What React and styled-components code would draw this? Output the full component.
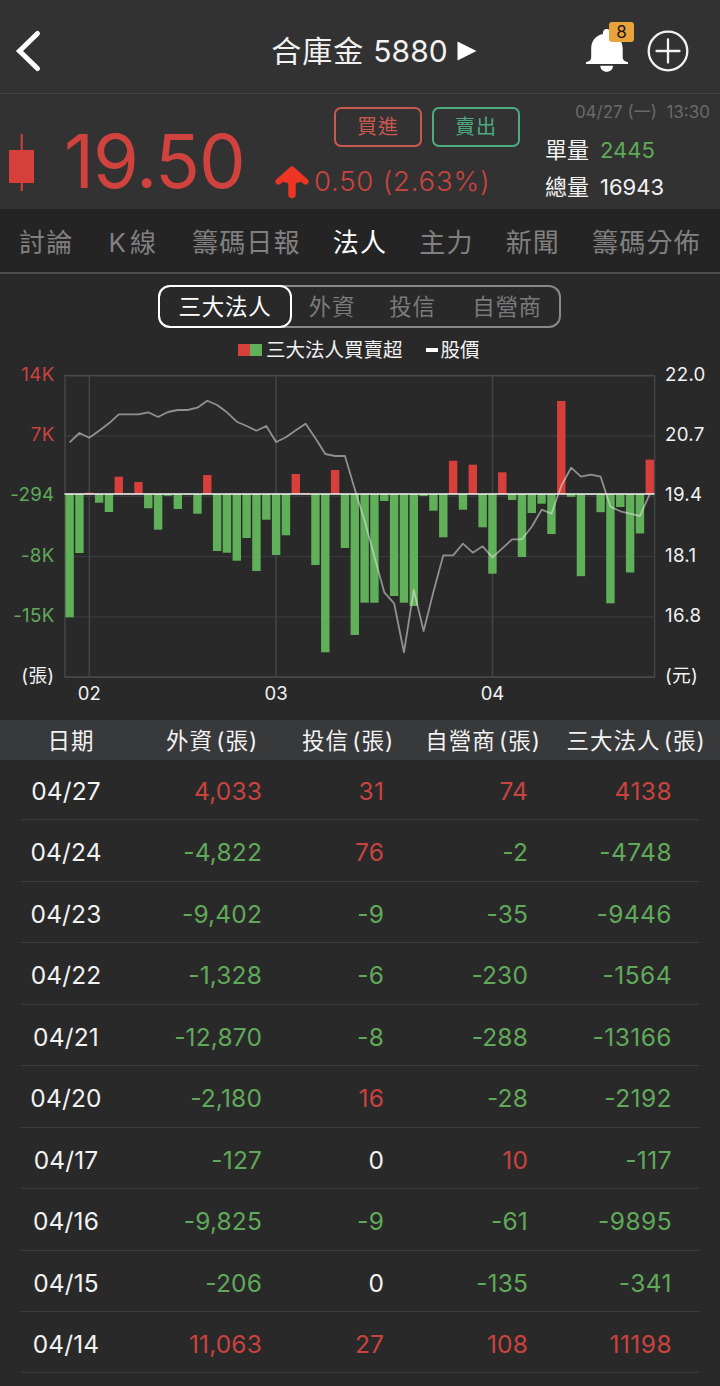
import React from 'react';
import styled, { createGlobalStyle } from 'styled-components';

const TABS = ['討論', 'K線', '籌碼日報', '法人', '主力', '新聞', '籌碼分佈'];

const SEGMENTS = [
  { label: '三大法人', width: 134 },
  { label: '外資', width: 80 },
  { label: '投信', width: 81 },
  { label: '自營商', width: 108 },
];

const COLUMNS = ['日期', '外資 (張)', '投信 (張)', '自營商 (張)', '三大法人 (張)'];

const ROWS = [
  ['04/27', '4,033', '31', '74', '4138'],
  ['04/24', '-4,822', '76', '-2', '-4748'],
  ['04/23', '-9,402', '-9', '-35', '-9446'],
  ['04/22', '-1,328', '-6', '-230', '-1564'],
  ['04/21', '-12,870', '-8', '-288', '-13166'],
  ['04/20', '-2,180', '16', '-28', '-2192'],
  ['04/17', '-127', '0', '10', '-117'],
  ['04/16', '-9,825', '-9', '-61', '-9895'],
  ['04/15', '-206', '0', '-135', '-341'],
  ['04/14', '11,063', '27', '108', '11198'],
];

// net buy / sell per day, in lots
const NET = [
  -14845, -7104, 160, -1047, -2167, 2083, 90, 1445, -1722, -4298, -205, -1806,
  -80, -2372, 2288, -6863, -7067, -8031, -5298, -9271, -3094, -7344, -4973,
  2408, 130, -8548, -19059, 2890, -6502, -16976, -13087, -13087, -843, -12281,
  -13087, -13485, -241, -2011, -5213, 4009, -1890, 3528, -4009, -9596, 2613,
  -722, -7585, -2288, -1168, -4816, 11198, -341, -9895, -117, -2192, -13166,
  -1564, -9446, -4748, 4138,
];

// price line, distance from the top of the plot
const PRICE = [
  66.6, 57.3, 62, 55, 47.6, 38.6, 38.6, 38.6, 36.6, 41.3, 36.3, 34.3, 34.3, 32,
  25, 29.3, 36.6, 46, 50.3, 55, 50.3, 66.3, 61.6, 54.6, 48, 62.6, 78.3, 80.3,
  80.3, 113.6, 145, 181, 216.6, 227.6, 276.6, 214.3, 255.3, 216, 179.6, 179.6,
  168, 177, 170.6, 181.6, 172.6, 163.6, 163.6, 151, 134, 138, 110.3, 92, 101,
  99, 101, 131, 135.6, 138, 140.3, 118.3,
];

const PLOT = { left: 1, top: 10.7, width: 590, height: 301.6 };
const STEP = PLOT.width / NET.length;
const BASE = 129;
const LOTS_PER_PX = 120.4;

const centerOf = i => PLOT.left + STEP * (i + 0.5) - 0.3;

const signOf = value => {
  if (value.startsWith('-')) return 'down';
  return value === '0' ? 'flat' : 'up';
};

const Chart = () => (
  <Plot viewBox="0 0 592 343">
    {[0, 1, 2, 3, 4, 5].map(i => (
      <line
        key={i}
        x1={PLOT.left - 1}
        x2={PLOT.left + PLOT.width}
        y1={PLOT.top + i * 60.3}
        y2={PLOT.top + i * 60.3}
        stroke={i % 5 ? '#383838' : '#484848'}
        strokeWidth={i % 5 ? 1.4 : 1.8}
      />
    ))}
    {[PLOT.left, centerOf(2), centerOf(21), centerOf(43), 590.6].map(x => (
      <line key={x} x1={x} x2={x} y1={PLOT.top} y2={312.3} stroke="#434343" strokeWidth="1.6" />
    ))}
    {NET.map((net, i) => {
      const size = Math.abs(net) / LOTS_PER_PX;
      return (
        <rect
          key={i}
          x={centerOf(i) - 4.2}
          y={net > 0 ? BASE - size : BASE}
          width="8.4"
          height={size}
          fill={net > 0 ? '#d63f3a' : '#60b059'}
        />
      );
    })}
    <line x1="0.5" x2="590.5" y1="129" y2="129" stroke="#f4f4f4" strokeWidth="1.7" />
    <polyline
      points={PRICE.map((y, i) => `${centerOf(i)},${y + PLOT.top}`).join(' ')}
      fill="none"
      stroke="#e6e6e6"
      strokeOpacity="0.55"
      strokeWidth="1.8"
      strokeLinejoin="round"
    />
    <Month x={centerOf(2)} y="335">02</Month>
    <Month x={centerOf(21)} y="335">03</Month>
    <Month x={centerOf(43)} y="335">04</Month>
  </Plot>
);

export default function App() {
  return (
    <Page>
      <GlobalStyle />
      <Header>
        <BackButton aria-label="back">
          <svg width="30" height="44" viewBox="0 0 30 44">
            <path d="M23.500 4.500 5.500 22l18 17.500" fill="none" stroke="#fff" strokeWidth="5" strokeLinecap="round" />
          </svg>
        </BackButton>
        <StockName>
          <span>合庫金</span> 5880
          <svg width="20" height="20" viewBox="0 0 20 20">
            <path d="M0.5 0.5 19.5 10 0.5 19.5z" fill="#fff" />
          </svg>
        </StockName>
        <Actions>
          <Bell>
            <svg width="44" height="46" viewBox="0 0 44 46">
              <path
                d="M17.800 6C17.800 2.800 19.300 1 21.700 1s3.900 1.800 3.900 5C33.500 7.600 37.700 13.500 37.700 20.500V29c0 3.200 1.800 4.200 5.300 5.200V36H1v-1.800c3.500-1 5.200-2 5.200-5.200v-8.500C6.200 13.500 10.200 7.600 17.800 6z"
                fill="#fff"
              />
              <path d="M15.300 37.700H28c0 3.800-2.800 6-6.300 6s-6.400-2.200-6.400-6z" fill="#fff" />
            </svg>
            <Badge>8</Badge>
          </Bell>
          <svg width="42" height="42" viewBox="0 0 42 42">
            <circle cx="21" cy="21" r="19.300" fill="none" stroke="#f2f2f2" strokeWidth="2.300" />
            <path d="M9.500 21h23M21 9.500v23" stroke="#f2f2f2" strokeWidth="2.300" strokeLinecap="round" />
          </svg>
        </Actions>
      </Header>

      <Quote>
        <Candle>
          <svg width="26" height="57" viewBox="0 0 26 57">
            <path d="M12.700 0v57" stroke="#d63f3a" strokeWidth="2" />
            <rect x="0" y="16" width="25" height="33" fill="#d63f3a" />
          </svg>
        </Candle>
        <Price>19.50</Price>
        <Trade>
          <TradeButtons>
            <TradeButton $color="#c9594f">買進</TradeButton>
            <TradeButton $color="#4cac80">賣出</TradeButton>
          </TradeButtons>
          <Change>
            <svg width="34" height="33" viewBox="0 0 34 33">
              <path
                d="M3.500 15.500 17 3.500 30.500 15.500"
                fill="none"
                stroke="#ee3524"
                strokeWidth="6"
                strokeLinecap="round"
                strokeLinejoin="round"
              />
              <path d="M17 6v22.500" stroke="#ee3524" strokeWidth="7.500" strokeLinecap="round" />
              <path d="M17 3 29 15 20 17.500h-6L5 15z" fill="#ee3524" />
            </svg>
            <span>0.50 (2.63%)</span>
          </Change>
        </Trade>
        <Volume>
          <Time>04/27 (一)&nbsp; 13:30</Time>
          <VolumeLine>
            單量 <Figure $sign="down">2445</Figure>
          </VolumeLine>
          <VolumeLine>
            總量 <Figure>16943</Figure>
          </VolumeLine>
        </Volume>
      </Quote>

      <Tabs>
        {TABS.map(tab => (
          <Tab key={tab} $active={tab === '法人'}>
            {tab}
          </Tab>
        ))}
      </Tabs>

      <ChartPanel>
        <Segments>
          {SEGMENTS.map(({ label, width }, i) => (
            <Segment key={label} $width={width} $active={i === 0}>
              {label}
            </Segment>
          ))}
        </Segments>
        <Legend>
          <BarKey />
          <span>三大法人買賣超</span>
          <LineKey />
          <span>股價</span>
        </Legend>
        <ChartRow>
          <Axis $align="right">
            <AxisLabel $sign="up">14K</AxisLabel>
            <AxisLabel $sign="up">7K</AxisLabel>
            <AxisLabel $sign="down">-294</AxisLabel>
            <AxisLabel $sign="down">-8K</AxisLabel>
            <AxisLabel $sign="down">-15K</AxisLabel>
            <AxisLabel>(張)</AxisLabel>
          </Axis>
          <Chart />
          <Axis $align="left">
            {['22.0', '20.7', '19.4', '18.1', '16.8', '(元)'].map(label => (
              <AxisLabel key={label}>{label}</AxisLabel>
            ))}
          </Axis>
        </ChartRow>
      </ChartPanel>

      <TableHead>
        {COLUMNS.map(column => (
          <HeadCell key={column}>{column}</HeadCell>
        ))}
      </TableHead>
      <TableBody>
        {ROWS.map(([date, ...values]) => (
          <Row key={date}>
            <DateCell>{date}</DateCell>
            {values.map((value, i) => (
              <Cell key={COLUMNS[i + 1]} $sign={signOf(value)}>
                {value}
              </Cell>
            ))}
          </Row>
        ))}
      </TableBody>
    </Page>
  );
}

const signColor = ({ $sign }) =>
  ({ up: '#c9433f', down: '#60a95a' })[$sign] || '#f2f2f2';

const GlobalStyle = createGlobalStyle`
  * {
    box-sizing: border-box;
  }
  body {
    margin: 0;
    background: #292929;
    font-family: Inter, 'Noto Sans CJK TC', sans-serif;
    font-weight: 400;
  }
  button {
    padding: 0;
    border: 0;
    background: none;
    font: inherit;
  }
  svg {
    display: block;
    flex: none;
  }
`;

const Page = styled.div`
  width: 720px;
  height: 1386px;
  overflow: hidden;
  background: #292929;
  color: #f2f2f2;
  white-space: nowrap;
`;

const Header = styled.header`
  display: grid;
  grid-template-columns: 150px 1fr 150px;
  align-items: center;
  height: 94px;
  padding-top: 9px;
  background: #323232;
  border-bottom: 1px solid #444;
`;

const BackButton = styled.button`
  width: 30px;
  margin-left: 14px;
`;

const StockName = styled.h1`
  display: flex;
  align-items: center;
  justify-content: center;
  gap: 9px;
  margin: 0;
  padding-left: 28px;
  font-size: 30px;
  font-weight: 400;
  line-height: 40px;
  span {
    letter-spacing: 1px;
  }
`;

const Actions = styled.div`
  display: flex;
  align-items: center;
  gap: 18px;
  margin-left: 15px;
`;

const Bell = styled.div`
  position: relative;
`;

const Badge = styled.span`
  position: absolute;
  top: -6px;
  left: 24px;
  width: 25px;
  height: 20px;
  border-radius: 3px;
  background: #e8a33d;
  color: #1d1a14;
  font-size: 17px;
  line-height: 20px;
  text-align: center;
`;

const Quote = styled.section`
  display: flex;
  height: 115px;
  background: #323232;
`;

const Candle = styled.div`
  padding: 40px 0 0 9px;
`;

const Price = styled.div`
  width: 240px;
  padding: 22px 0 0 29px;
  color: #d0423d;
  font-size: 74px;
  letter-spacing: -1.1px;
  line-height: 90px;
`;

const Trade = styled.div`
  width: 270px;
`;

const TradeButtons = styled.div`
  display: flex;
  gap: 10px;
  padding: 13px 0 0 59px;
`;

const TradeButton = styled.button`
  width: 88px;
  height: 40px;
  border: 2px solid ${({ $color }) => $color};
  border-radius: 7px;
  color: ${({ $color }) => $color};
  font-size: 20px;
  letter-spacing: 1px;
  line-height: 36px;
`;

const Change = styled.div`
  display: flex;
  align-items: center;
  gap: 5px;
  margin-top: 18px;
  color: #cb4440;
  font-size: 27.5px;
  font-weight: 350;
  letter-spacing: 0.8px;
  span {
    line-height: 32px;
    padding-bottom: 2px;
  }
`;

const Volume = styled.div`
  flex: 1;
  padding-right: 10px;
`;

const Time = styled.div`
  height: 38px;
  padding-top: 7px;
  color: #696969;
  font-size: 17px;
  line-height: 22px;
  text-align: right;
`;

const VolumeLine = styled.div`
  display: flex;
  align-items: baseline;
  gap: 11px;
  height: 37px;
  font-size: 22px;
  line-height: 37px;
`;

const Figure = styled.span`
  color: ${signColor};
`;

const Tabs = styled.nav`
  display: flex;
  align-items: center;
  justify-content: space-between;
  height: 65px;
  padding: 0 19px;
  background: #242424;
  border-bottom: 2px solid #4e4e4e;
`;

const Tab = styled.a`
  color: ${({ $active }) => ($active ? '#fff' : '#808080')};
  font-size: 26px;
  letter-spacing: 1.2px;
  &:nth-child(2) {
    padding-left: 3px;
    letter-spacing: 4px;
  }
`;

const ChartPanel = styled.section`
  display: flex;
  flex-direction: column;
  height: 446px;
  padding-top: 11px;
`;

const Segments = styled.div`
  display: flex;
  width: 403px;
  height: 43px;
  margin-left: 158px;
  border-radius: 12px;
  box-shadow: inset 0 0 0 2px #888;
`;

const Segment = styled.button`
  width: ${({ $width }) => $width}px;
  padding-top: 1px;
  border: 2px solid ${({ $active }) => ($active ? '#fff' : 'transparent')};
  border-radius: 12px;
  color: ${({ $active }) => ($active ? '#fff' : '#7a7a7a')};
  font-size: 22.5px;
  letter-spacing: 0.7px;
  line-height: 38px;
`;

const Legend = styled.div`
  display: flex;
  align-items: center;
  height: 37px;
  padding: 6px 0 0 238px;
  font-size: 19.5px;
  line-height: 26px;
`;

const BarKey = styled.i`
  width: 24px;
  height: 12px;
  margin-right: 4px;
  background: linear-gradient(90deg, #d63f3a 50%, #60b059 50%);
`;

const LineKey = styled.i`
  width: 12px;
  height: 4px;
  margin: 0 3px 0 23px;
  background: #fff;
`;

const ChartRow = styled.div`
  display: flex;
`;

const Plot = styled.svg`
  width: 592px;
  height: 343px;
`;

const Month = styled.text`
  fill: #f2f2f2;
  font-size: 18.5px;
  text-anchor: middle;
`;

const Axis = styled.div`
  display: flex;
  flex-direction: column;
  justify-content: space-between;
  width: 64px;
  height: 321px;
  padding: 0 ${({ $align }) => ($align === 'right' ? '9.5px 0 0' : '0 0 9px')};
  text-align: ${({ $align }) => $align};
`;

const AxisLabel = styled.span`
  color: ${signColor};
  font-size: 18.7px;
  letter-spacing: 0.3px;
  line-height: 20px;
`;

const TableHead = styled.div`
  display: grid;
  grid-template-columns: 142px 140px 132px 138px 168px;
  height: 40px;
  background: #38393b;
`;

const HeadCell = styled.span`
  font-size: 22.5px;
  letter-spacing: 1px;
  line-height: 41px;
  text-align: center;
  word-spacing: -4px;
`;

const TableBody = styled.div`
  margin-top: -1px;
`;

const Row = styled.div`
  display: grid;
  grid-template-columns: 111px 130px 122px 144px 144px;
  height: 61.45px;
  margin: 0 21px;
  border-bottom: 1.5px solid #3e3e3e;
  font-size: 24.5px;
  letter-spacing: 0.15px;
  line-height: 64px;
`;

const DateCell = styled.span`
  width: 90px;
  color: #f2f2f2;
  text-align: center;
`;

const Cell = styled.span`
  color: ${signColor};
  text-align: right;
  &:last-child {
    letter-spacing: 0.45px;
  }
`;
